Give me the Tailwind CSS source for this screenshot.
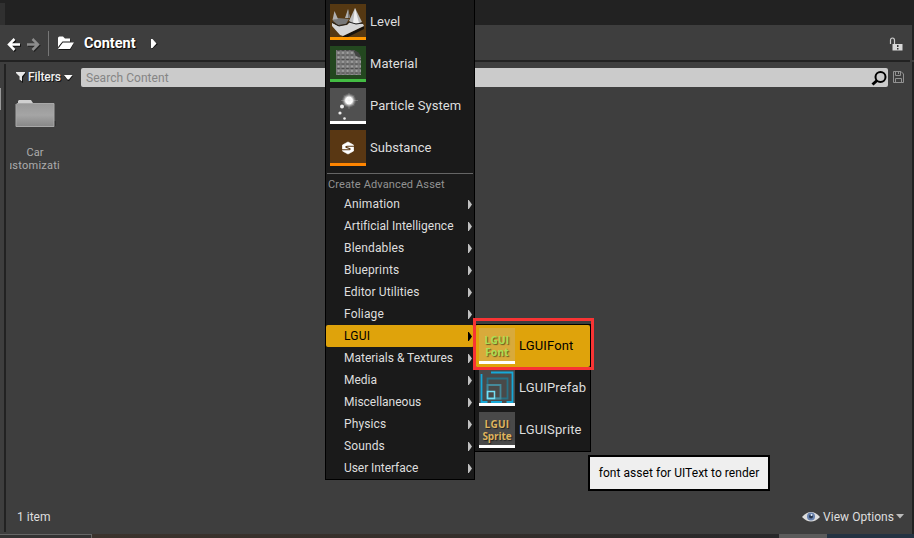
<!DOCTYPE html>
<html lang="en">
<head>
<meta charset="utf-8">
<title>Content Browser</title>
<script src="https://cdn.jsdelivr.net/npm/@tailwindcss/browser@4"></script>
</head>
<body class="relative h-[538px] w-[914px] overflow-hidden bg-[#3e3e3e] font-['Roboto','Liberation_Sans',sans-serif] text-[12px] text-[#dedede]">
<div class="flex h-full flex-col">
  <div class="flex h-[25px] shrink-0 items-end bg-[#222]"><div class="h-[22px] w-[5px] bg-[#303030]"></div></div>
  <header class="flex h-[35px] shrink-0 items-center border-r-2 border-[#222] pl-[7px]">
    <svg class="mt-[4px] h-[16px] w-[34px] shrink-0" viewBox="0 0 34 16" fill="none" stroke-width="2.5"><path d="M8.500 3L3 8.500 8.500 14M3 8.500H14" stroke="#111"/><path d="M7.500 2L2 7.500 7.500 13M2 7.500H13" stroke="#fff"/><path d="M26.500 3L32 8.500 26.500 14M32 8.500H21" stroke="#222"/><path d="M25.500 2L31 7.500 25.500 13M31 7.500H20" stroke="#8c8c8c"/></svg>
    <div class="ml-[7px] mt-[1px] h-[25px] w-px bg-[#777]"></div>
    <svg class="ml-[9px] mt-[2px] h-[15px] w-[17px] shrink-0" viewBox="0 0 17 15"><path d="M1 14V3q0-1.500 1.500-1.500H6L8 3.500h4.500V7h3.500L12.500 14z" fill="#151515"/><path d="M0 11V2Q0 .5 1.500.5H5L7 2.500h5V5.500H4.500z" fill="#fff"/><path d="M4.800 6.500H16L12 13H0z" fill="#fff"/></svg>
    <span class="ml-[9px] mt-[2px] w-[52px] text-[14.500px] font-bold leading-[20px] text-white [text-shadow:1px_1px_1px_#000]">Content</span>
    <svg class="ml-[15px] mt-[2px] h-[10px] w-[7px]" viewBox="0 0 7 10"><path d="M1 1l6 4-6 5z" fill="#111"/><path d="M0 0h1.500L5.500 4.500 1.500 9H0z" fill="#fff"/></svg>
    <svg class="ml-auto mr-[9px] mt-[3px] h-[15px] w-[14px]" viewBox="0 0 14 15"><path d="M1.500 7V3.200Q1.500 1 3.500 1T5.500 3.200V7" fill="none" stroke="#ccc" stroke-width="1.200"/><path d="M3.500 7h10v6.500h-10z" fill="#d8d8d8"/><path d="M8 8h1.500v2H8zM8 11h1.500v1.500H8z" fill="#333"/></svg>
  </header>
  <div class="mr-[4px] h-[2px] shrink-0 bg-[#222]"></div>
  <main class="flex min-h-0 flex-1 border-r-2 border-[#222]">
    <div class="h-full w-[4px] shrink-0 pt-[26px]"><div class="h-[22px] w-px bg-[#999]"></div></div>
    <div class="mt-[2px] mb-[2px] w-[2px] shrink-0 bg-[#222]"></div>
    <section class="flex min-w-0 flex-1 flex-col">
      <div class="mt-[6px] flex h-[19px] shrink-0 items-center">
        <svg class="ml-[10px] h-[11px] w-[10px] shrink-0" viewBox="0 0 10 11"><path d="M1 1h9L7 6v5L4 9V6z" fill="#111"/><path d="M0 0h9v1L6 4.500v5L3.500 7.500v-3L0 1z" fill="#e8e8e8"/></svg>
        <span class="ml-[2px] -mt-[1px] w-[35px] whitespace-nowrap text-[12px] font-medium tracking-[-.1px] text-[#f0f0f0] [text-shadow:1px_1px_0_#111]">Filters</span>
        <svg class="ml-[1px] h-[6px] w-[9px] shrink-0" viewBox="0 0 9 6"><path d="M0 1h9L5 6H4z" fill="#111"/><path d="M0 0h8.500L5 4.500H3.500z" fill="#fff"/></svg>
        <div class="ml-[8px] flex h-[19px] w-[807px] shrink-0 items-center rounded-[2px] bg-[#cbcbcb] pl-[5px] text-[#858585]"><span class="tracking-[.05px]">Search Content</span>
          <svg class="ml-auto h-[18px] w-[17px]" viewBox="0 0 17 18"><circle cx="9.500" cy="8" r="5" fill="none" stroke="#000" stroke-width="2"/><path d="M6 11.500L1.500 15.500" stroke="#000" stroke-width="3"/></svg>
        </div>
        <svg class="ml-[5px] mb-[2px] h-[12px] w-[11px] shrink-0" viewBox="0 0 11 12" fill="none" stroke="#929292"><path d="M.5.5H8L10.500 3v8.500H.5zM2.500.5v4h5v-4M2.500 11.500v-4h6v4M5.500 1v2"/></svg>
      </div>
      <div class="ml-[3px] mt-[12px] flex w-[52px] flex-col items-center">
        <svg class="h-[29px] w-[41px]" viewBox="0 0 41 29"><defs><linearGradient id="folder" x1="0" y1="0" x2="0" y2="1"><stop stop-color="#989898"/><stop offset=".5" stop-color="#a5a5a5"/><stop offset="1" stop-color="#878787"/></linearGradient></defs><path d="M38 22h2.500v5H38z" fill="#222"/><path d="M3 4V2l1-1h12l2 3h20v2H3z" fill="#cfcfcf"/><path d="M1 5.500l1-1h37V27.500H1z" fill="url(#folder)" stroke="#a8a8a8"/></svg>
        <div class="mt-[18px] flex w-[50px] flex-col items-center overflow-hidden text-[11px] leading-[13px] text-[#adadad]"><span>Car</span><span class="w-[50px] overflow-hidden whitespace-nowrap tracking-[.25px]"><span class="-ml-[4px]">ustomizati</span></span></div>
      </div>
      <footer class="mt-auto flex h-[35px] items-center pl-[11px] pr-[8px]">
        <span>1 item</span>
        <svg class="ml-auto h-[12px] w-[18px]" viewBox="0 0 18 12"><path d="M0 6Q9-4 18 6 9 15 0 6" fill="#ddd"/><circle cx="9" cy="5.500" r="4" fill="#6680ac"/><circle cx="9" cy="5.500" r="2" fill="#26354d"/><circle cx="9.500" cy="4" r="1" fill="#e8f2ff"/></svg>
        <span class="ml-[3px] w-[72px] whitespace-nowrap tracking-[.05px]">View Options</span>
        <svg class="ml-[1px] h-[5px] w-[8px]" viewBox="0 0 8 5"><path d="M0 0h8L4 4.500z" fill="#bbb"/></svg>
      </footer>
    </section>
  </main>
  <div class="flex h-[4px] shrink-0"><div class="w-[92px] border-t border-r border-[#666] bg-[#333]"></div><div class="flex-1 bg-linear-to-r from-[#3b332d] via-[#352f2b] to-[#28282a]"></div><div class="w-[48px] bg-[#5b5b5b]"></div><div class="w-[87px] bg-[#243342]"></div></div>
</div>

<nav class="absolute left-[325px] top-0 flex h-[480px] w-[150px] flex-col border-x border-b border-black bg-[#1a1a1a]">
  <div class="flex flex-col gap-[6px] pl-[4px] pt-[4px] text-[13px] tracking-[.04px]">
    <div class="flex h-[36px] items-center gap-[4px]">
      <svg class="h-[36px] w-[36px]" viewBox="0 0 36 36"><path d="M0 0h36v36H0z" fill="#553812"/><path d="M13 32l21-10v3L18 33h-5z" fill="#17120c"/><path d="M2 19l6 3 9-1 3-3 13 2 1 2-21 10-3-1-8-9z" fill="#d6d6d6"/><path d="M2.500 16.500L8 14l11 1-3 5-8 1z" fill="#777"/><path d="M2.500 16l2-9 3.500 8zM15 14l3-9 2 9z" fill="#b0b0b0"/><path d="M18 5l2 9h-2z" fill="#777"/><path d="M19 17l6-13 7 14q-6 4-13-1z" fill="#bbb"/><path d="M25 4l4 15-6 0z" fill="#eee"/><path d="M2 18l7 4 8-2 2-2 7 2 7-1" fill="none" stroke="#222"/><path d="M0 33h36v3H0z" fill="#ff9800"/></svg><span>Level</span>
    </div>
    <div class="flex h-[36px] items-center gap-[4px]">
      <svg class="h-[36px] w-[36px]" viewBox="0 0 36 36"><defs><pattern id="dots" width="4.500" height="4.500" patternUnits="userSpaceOnUse" x="6" y="5"><path d="M0 0h4.500v4.500H0z" fill="#7a7a7a"/><circle cx="2.500" cy="2" r="1" fill="#aaa"/><path d="M1 3.500h3v1H1z" fill="#4a4a4a"/></pattern></defs><path d="M0 0h36v36H0z" fill="#23471f"/><path d="M6 4h18l7 7v18H6z" fill="url(#dots)"/><path d="M23 4q7 1 8 8l-5-2z" fill="#424542"/><path d="M0 33h36v3H0z" fill="#43bc43"/></svg><span>Material</span>
    </div>
    <div class="flex h-[36px] items-center gap-[4px]">
      <svg class="h-[36px] w-[36px]" viewBox="0 0 36 36"><defs><radialGradient id="glow"><stop stop-color="#fff"/><stop offset=".45" stop-color="#fff"/><stop offset="1" stop-color="#888" stop-opacity="0"/></radialGradient></defs><path d="M0 0h36v36H0z" fill="#505050"/><circle cx="19" cy="12.500" r="7.500" fill="url(#glow)"/><path d="M19 5v16M11 12.500h17M14 7.500l10 10M24 7.500L14 17.500" stroke="#ddd" stroke-opacity=".35" stroke-width=".7"/><g fill="#eee"><circle cx="12" cy="18.500" r="2"/><circle cx="10" cy="25" r="1.600"/><circle cx="14.500" cy="30.500" r="1.300"/></g><path d="M0 33h36v3H0z" fill="#fff"/></svg><span class="whitespace-nowrap">Particle System</span>
    </div>
    <div class="flex h-[36px] items-center gap-[4px]">
      <svg class="h-[36px] w-[36px]" viewBox="0 0 36 36"><path d="M0 0h36v36H0z" fill="#593713"/><path d="M18 12l5.500 3v6L18 24l-5.500-3v-6z" fill="#fff" stroke="#fff" stroke-width=".7"/><path d="M24 16.200h-6.500q-2 0-1.500 1l4 1.600q.5 1-1.500 1H12" fill="none" stroke="#593713" stroke-width="1.100"/><path d="M0 33h36v3H0z" fill="#ff8500"/></svg><span>Substance</span>
    </div>
  </div>
  <div class="mx-[1px] mt-[7px] h-px shrink-0 bg-[#656565]"></div>
  <div class="h-[19px] shrink-0 pl-[2px] text-[11px] leading-[21px] tracking-[.13px] text-[#929292]"><span>Create Advanced Asset</span></div>
  <div class="flex flex-col leading-[22px] [&>div]:flex [&>div]:h-[22px] [&>div]:items-center [&>div]:justify-between [&>div]:pl-[18px] [&>div]:pr-[2px] [&_svg]:h-[9px] [&_svg]:w-[4px] [&_svg]:fill-[#c0c0c0]">
    <div><span class="tracking-[.15px]">Animation</span><svg viewBox="0 0 4 9"><path d="M0 0H.8L4 4.500 .8 9H0z"/></svg></div>
    <div><span class="tracking-[.02px]">Artificial Intelligence</span><svg viewBox="0 0 4 9"><path d="M0 0H.8L4 4.500 .8 9H0z"/></svg></div>
    <div><span class="tracking-[.15px]">Blendables</span><svg viewBox="0 0 4 9"><path d="M0 0H.8L4 4.500 .8 9H0z"/></svg></div>
    <div><span class="tracking-[.15px]">Blueprints</span><svg viewBox="0 0 4 9"><path d="M0 0H.8L4 4.500 .8 9H0z"/></svg></div>
    <div><span class="tracking-[.1px]">Editor Utilities</span><svg viewBox="0 0 4 9"><path d="M0 0H.8L4 4.500 .8 9H0z"/></svg></div>
    <div><span class="tracking-[.18px]">Foliage</span><svg viewBox="0 0 4 9"><path d="M0 0H.8L4 4.500 .8 9H0z"/></svg></div>
    <div class="rounded-[2px] bg-[#dfa30b] text-black"><span class="tracking-[.2px]">LGUI</span><svg viewBox="0 0 4 9"><path d="M0 0H.8L4 4.500 .8 9H0z" fill="#000"/></svg></div>
    <div><span>Materials &amp; Textures</span><svg viewBox="0 0 4 9"><path d="M0 0H.8L4 4.500 .8 9H0z"/></svg></div>
    <div><span>Media</span><svg viewBox="0 0 4 9"><path d="M0 0H.8L4 4.500 .8 9H0z"/></svg></div>
    <div><span>Miscellaneous</span><svg viewBox="0 0 4 9"><path d="M0 0H.8L4 4.500 .8 9H0z"/></svg></div>
    <div><span class="tracking-[.12px]">Physics</span><svg viewBox="0 0 4 9"><path d="M0 0H.8L4 4.500 .8 9H0z"/></svg></div>
    <div><span class="tracking-[.12px]">Sounds</span><svg viewBox="0 0 4 9"><path d="M0 0H.8L4 4.500 .8 9H0z"/></svg></div>
    <div><span class="tracking-[-.06px]">User Interface</span><svg viewBox="0 0 4 9"><path d="M0 0H.8L4 4.500 .8 9H0z"/></svg></div>
  </div>
</nav>

<nav class="absolute left-[474px] top-[324px] flex h-[128px] w-[117px] flex-col border border-black bg-[#1a1a1a] text-[13px] tracking-[.15px]">
  <div class="flex h-[42px] items-center gap-[4px] rounded-[2px] bg-[#dfa30b] pl-[4px] text-black">
    <div class="flex h-[36px] w-[36px] shrink-0 flex-col items-center border-b-[3px] border-white bg-[#d8aa3b] pt-[7px] font-['Open_Sans'] text-[10px] font-bold text-[#a8df55] [text-shadow:1px_1px_1px_#665c20]"><span class="leading-[11px] tracking-[.3px]">LGUI</span><span class="leading-[12px] tracking-[.2px]">Font</span></div><span>LGUIFont</span>
  </div>
  <div class="flex h-[42px] items-center gap-[4px] pl-[4px]">
    <svg class="h-[36px] w-[36px] shrink-0" viewBox="0 0 36 36"><path d="M0 0h36v36H0z" fill="#494949"/><g fill="none"><path d="M2.500 4v28h6M12 2.500h21.500V32h-6M12 32h11" stroke="#16a9d9" stroke-width="1.800"/><path d="M8.500 28.500V8.500h20v20z" stroke="#287084" stroke-width="1.800"/><path d="M8.500 15h13v13.500h-13z" stroke="#46899a" stroke-width="1.800"/><path d="M8.500 21.500h7v7h-7z" stroke="#75def4" stroke-width="1.500"/></g><path d="M0 33h36v3H0z" fill="#fff"/></svg><span>LGUIPrefab</span>
  </div>
  <div class="flex h-[42px] items-center gap-[4px] pl-[4px]">
    <div class="flex h-[36px] w-[36px] shrink-0 flex-col items-center border-b-[3px] border-white bg-[#494949] pt-[7px] font-['Open_Sans'] text-[10px] font-bold text-[#dfb45e] [text-shadow:1px_1px_1px_#222]"><span class="leading-[11px] tracking-[.3px]">LGUI</span><span class="leading-[12px] tracking-[-.1px]">Sprite</span></div><span>LGUISprite</span>
  </div>
</nav>
<div class="absolute left-[473px] top-[318px] h-[52px] w-[121px] border-[3px] border-[#f83434]"></div>
<div class="absolute left-[588px] top-[455px] flex h-[36px] w-[182px] items-center justify-center border-2 border-black bg-[#efefef] text-black"><span class="whitespace-nowrap tracking-[.04px]">font asset for UIText to render</span></div>
</body>
</html>
